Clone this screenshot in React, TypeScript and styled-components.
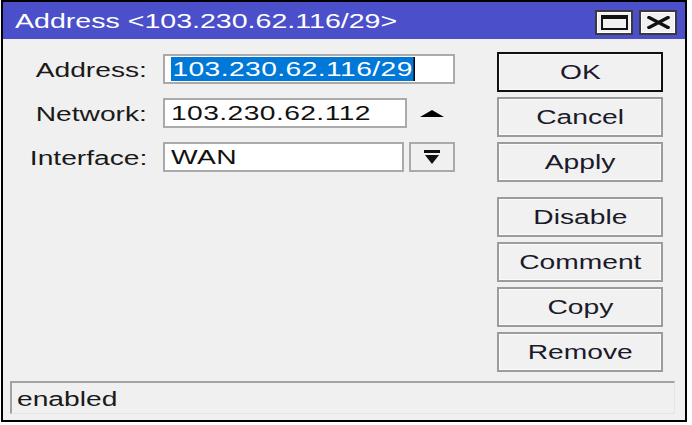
import React from "react";
import styled, { createGlobalStyle } from "styled-components";

const SX = 1.41;

const GlobalStyle = createGlobalStyle`
  html, body { margin: 0; padding: 0; background: #ffffff; }
  body { font-family: "Liberation Sans", Arial, sans-serif; }
`;

const Page = styled.div`
  width: 692px;
  height: 425px;
  overflow: hidden;
  background: #ffffff;
  padding-left: 1px;
  box-sizing: border-box;
`;

const Window = styled.div`
  width: 686px;
  height: 422px;
  box-sizing: border-box;
  border: 2px solid #000;
  background: #f0f0f0;
  display: flex;
  flex-direction: column;
`;

const TitleBar = styled.div`
  height: 37px;
  flex: none;
  background: #4b4fc9;
  display: flex;
  align-items: flex-start;
  padding: 0 8px 0 12px;
`;

const TitleText = styled.div`
  color: #ffffff;
  font-size: 21px;
  line-height: 38px;
  white-space: nowrap;
`;

const Stretch = styled.span<{ $origin?: string; $sx?: number }>`
  display: inline-block;
  transform: scaleX(${(p) => p.$sx || SX});
  transform-origin: ${(p) => p.$origin || "left"} center;
  white-space: nowrap;
`;

const TitleButtons = styled.div`
  margin-left: auto;
  padding-top: 8px;
  display: flex;
  gap: 6px;
`;

const TitleButton = styled.div`
  width: 38px;
  height: 25px;
  box-sizing: border-box;
  border: 2px solid #3a3a3a;
  background: #f1f1f1;
  box-shadow: inset 0 0 0 1px #ffffff;
  display: flex;
  align-items: center;
  justify-content: center;
`;

const Body = styled.div`
  flex: 1;
  display: flex;
`;

const Form = styled.div`
  padding-top: 15px;
  display: flex;
  flex-direction: column;
  gap: 14px;
`;

const Row = styled.div`
  display: flex;
  align-items: center;
  height: 30px;
`;

const Label = styled.div`
  width: 144px;
  margin-right: 16px;
  text-align: right;
  font-size: 20px;
  color: #1a1a1a;
  padding-top: 2px;
`;

const Field = styled.div`
  width: 292px;
  display: flex;
  align-items: center;
`;

const Input = styled.div<{ $w: number }>`
  width: ${(p) => p.$w}px;
  height: 30px;
  box-sizing: border-box;
  border: 2px solid #aaaaaa;
  background: #ffffff;
  padding-left: 6px;
  display: flex;
  align-items: center;
  font-size: 20px;
  letter-spacing: 0.3px;
  color: #111111;
  overflow: hidden;
`;

const Selected = styled.span`
  display: inline-block;
  background: #0078d7;
  color: #ffffff;
  height: 24px;
  line-height: 25px;
  padding: 0 1px 0 1px;
  border-right: 1.5px solid #000;
  transform: scaleX(${SX});
  transform-origin: left center;
  white-space: nowrap;
`;

const SpinArea = styled.div`
  flex: 1;
  display: flex;
  justify-content: center;
  align-items: center;
  padding-left: 2px;
`;

const DropButton = styled.div`
  margin-left: 5px;
  width: 46px;
  height: 30px;
  box-sizing: border-box;
  border: 2px solid #aaaaaa;
  background: #f0f0f0;
  display: flex;
  align-items: center;
  justify-content: center;
`;

const ButtonColumn = styled.div`
  margin-left: 42px;
  padding-top: 13px;
  width: 166px;
  display: flex;
  flex-direction: column;
  gap: 5px;
`;

const Button = styled.div<{ $default?: boolean; $groupStart?: boolean }>`
  height: 40px;
  box-sizing: border-box;
  border: 2px solid ${(p) => (p.$default ? "#111111" : "#9c9c9c")};
  background: #f1f1f1;
  box-shadow: inset 0 0 0 1px #fbfbfb;
  margin-top: ${(p) => (p.$groupStart ? "10px" : "0")};
  display: flex;
  align-items: center;
  justify-content: center;
  font-size: 20px;
  color: #1a1a2a;
`;

const StatusBar = styled.div`
  flex: none;
  height: 33px;
  margin: 0 10px 6px 7px;
  box-sizing: border-box;
  border-top: 2px solid #a3a3a3;
  border-left: 2px solid #a3a3a3;
  border-right: 1px solid #e4e4e4;
  border-bottom: 1px solid #e4e4e4;
  padding: 3px 0 0 5px;
  display: flex;
  align-items: center;
  font-size: 20px;
  color: #1a1a1a;
`;

const MaxIcon = () => (
  <svg width="27" height="15" viewBox="0 0 27 15">
    <rect x="1" y="1.5" width="25" height="12.5" fill="none" stroke="#111" strokeWidth="2" />
    <rect x="0" y="0" width="27" height="4" fill="#111" />
  </svg>
);

const CloseIcon = () => (
  <svg width="23" height="13" viewBox="0 0 23 13">
    <path d="M2 1.5 L21 11.5 M21 1.5 L2 11.5" stroke="#111" strokeWidth="3.4" strokeLinecap="square" />
  </svg>
);

const UpArrow = () => (
  <svg width="24" height="7" viewBox="0 0 24 7">
    <polygon points="0,7 12,0 24,7" fill="#000" />
  </svg>
);

const DropIcon = () => (
  <svg width="16" height="15" viewBox="0 0 16 15">
    <rect x="0" y="0" width="16" height="3" fill="#111" />
    <polygon points="1,5 15,5 8,14" fill="#111" />
  </svg>
);

const buttons = ["OK", "Cancel", "Apply", "Disable", "Comment", "Copy", "Remove"];

export default function App() {
  return (
    <>
      <GlobalStyle />
      <Page>
        <Window>
          <TitleBar>
            <TitleText>
              <Stretch $sx={1.36}>Address &lt;103.230.62.116/29&gt;</Stretch>
            </TitleText>
            <TitleButtons>
              <TitleButton>
                <MaxIcon />
              </TitleButton>
              <TitleButton>
                <CloseIcon />
              </TitleButton>
            </TitleButtons>
          </TitleBar>
          <Body>
            <Form>
              <Row>
                <Label>
                  <Stretch $origin="right">Address:</Stretch>
                </Label>
                <Field>
                  <Input $w={292}>
                    <Selected>103.230.62.116/29</Selected>
                  </Input>
                </Field>
              </Row>
              <Row>
                <Label>
                  <Stretch $origin="right">Network:</Stretch>
                </Label>
                <Field>
                  <Input $w={244}>
                    <Stretch>103.230.62.112</Stretch>
                  </Input>
                  <SpinArea>
                    <UpArrow />
                  </SpinArea>
                </Field>
              </Row>
              <Row>
                <Label>
                  <Stretch $origin="right">Interface:</Stretch>
                </Label>
                <Field>
                  <Input $w={241}>
                    <Stretch>WAN</Stretch>
                  </Input>
                  <DropButton>
                    <DropIcon />
                  </DropButton>
                </Field>
              </Row>
            </Form>
            <ButtonColumn>
              {buttons.map((b, i) => (
                <Button key={b} $default={i === 0} $groupStart={i === 3}>
                  <Stretch $origin="center">{b}</Stretch>
                </Button>
              ))}
            </ButtonColumn>
          </Body>
          <StatusBar>
            <Stretch>enabled</Stretch>
          </StatusBar>
        </Window>
      </Page>
    </>
  );
}
